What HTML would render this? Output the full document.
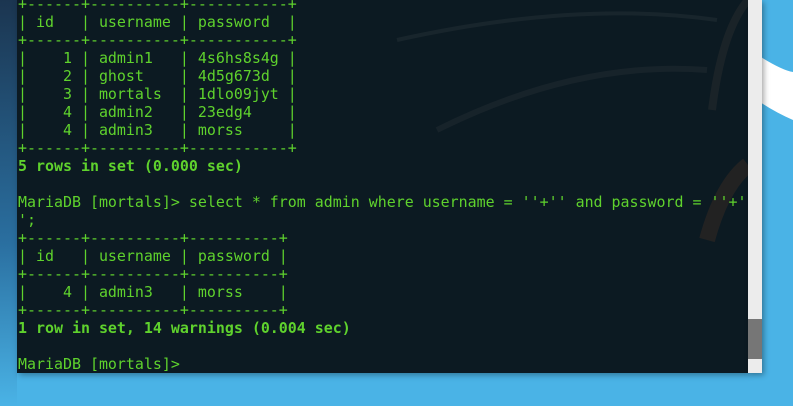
<!DOCTYPE html>
<html><head><style>
html,body{margin:0;padding:0;width:793px;height:406px;overflow:hidden;background:#4ab3e6;}
.bgL{position:absolute;left:0;top:0;width:17px;height:406px;background:linear-gradient(#1b3550,#2a6fa0 60%,#4ab3e6);}
.term{position:absolute;left:17px;top:0;width:731px;height:373px;background:#0c1a22;overflow:hidden;box-shadow:2px 2px 6px rgba(0,0,0,.35);}
.sb{position:absolute;left:748px;top:0;width:14px;height:373px;background:#ececec;box-shadow:2px 2px 6px rgba(0,0,0,.35);}
.thumb{position:absolute;left:0;top:319px;width:14px;height:40px;background:#767676;}
pre{position:absolute;left:1px;top:-5px;margin:0;font-family:"DejaVu Sans Mono","Liberation Mono",monospace;font-size:14.95px;line-height:18px;color:#5fd22d;}
b{font-weight:bold;}
svg{position:absolute;left:0;top:0;}
</style></head><body>
<div class="bgL"></div>
<svg width="793" height="406">
<path d="M750 50 Q780 70 793 72 L793 120 Q770 110 750 95Z" fill="#ffffff"/>
</svg>
<div class="term">
<svg width="731" height="373">
<path d="M380 40 Q560 0 700 20" stroke="#18252c" stroke-width="4" fill="none"/>
<path d="M420 130 Q560 60 690 70" stroke="#17232a" stroke-width="6" fill="none"/>
<path d="M695 110 Q705 30 731 0" stroke="#1a2328" stroke-width="8" fill="none"/>
<path d="M690 240 Q705 185 731 165" stroke="#222" stroke-width="16" fill="none"/>
</svg>
<pre>+------+----------+-----------+
| id   | username | password  |
+------+----------+-----------+
|    1 | admin1   | 4s6hs8s4g |
|    2 | ghost    | 4d5g673d  |
|    3 | mortals  | 1dlo09jyt |
|    4 | admin2   | 23edg4    |
|    4 | admin3   | morss     |
+------+----------+-----------+
<b>5 rows in set (0.000 sec)</b>

MariaDB [mortals]&gt; select * from admin where username = ''+'' and password = ''+'
';
+------+----------+----------+
| id   | username | password |
+------+----------+----------+
|    4 | admin3   | morss    |
+------+----------+----------+
<b>1 row in set, 14 warnings (0.004 sec)</b>

MariaDB [mortals]&gt; </pre>
</div>
<div class="sb"><div class="thumb"></div></div>
</body></html>
